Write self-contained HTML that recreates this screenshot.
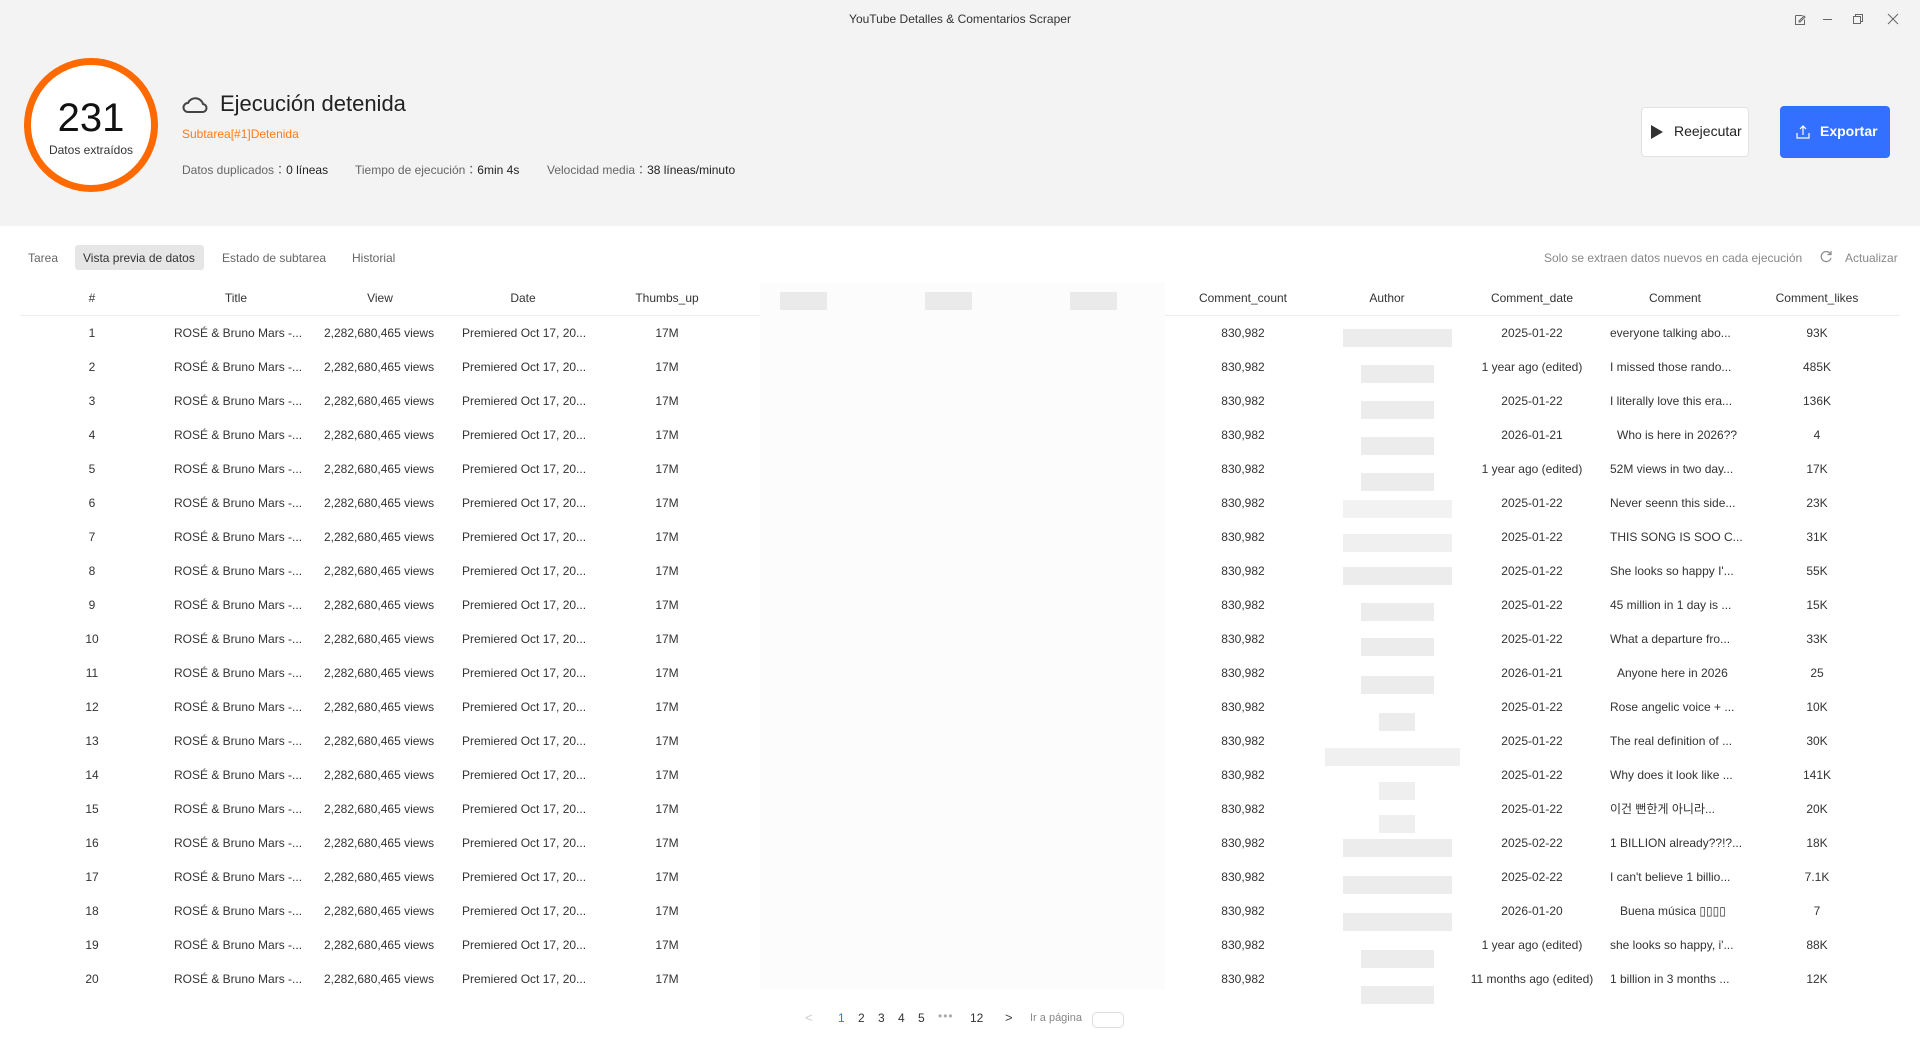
<!DOCTYPE html>
<html><head><meta charset="utf-8"><style>
*{margin:0;padding:0;box-sizing:border-box}
body{width:1920px;height:1040px;position:relative;background:#fff;font-family:"Liberation Sans","Noto Sans CJK KR",sans-serif;color:#333;overflow:hidden}
.hdr{position:absolute;left:0;top:0;width:1920px;height:226px;background:#f3f3f3}
.a{position:absolute;white-space:nowrap}
.circle{position:absolute;left:24px;top:58px;width:134px;height:134px;border:7px solid #ff6a00;border-radius:50%;background:#fff}
.row{position:absolute;left:20px;width:1880px;height:34px;font-size:12px}
.row span{position:absolute;top:0;line-height:34px;white-space:nowrap}
.c{width:140px;text-align:center}
.blur{position:absolute;left:760px;top:282px;width:405px;height:708px;background:#fcfcfc}
.box{position:absolute;background:#ececec;height:18px}
</style></head><body>
<div class="hdr"></div>
<div class="a" style="left:0;width:1920px;top:12px;text-align:center;font-size:12px;color:#333">YouTube Detalles &amp; Comentarios Scraper</div>
<svg class="a" style="left:1792px;top:12px" width="120" height="16" viewBox="0 0 120 16" fill="none" stroke="#666" stroke-width="1">
<path d="M3.5 3.5h7M3.5 3.5v9h9v-5"/><path d="M7 9l5-5 1 1-5 5H7z"/>
<path d="M31 7.5h9"/>
<rect x="61.5" y="4.5" width="7" height="7"/><path d="M63.5 4.5v-2h7v7h-2"/>
<path d="M96 2l10 10M106 2L96 12"/>
</svg>
<div class="circle"></div>
<div class="a" style="left:24px;width:134px;top:96px;text-align:center;font-size:40px;color:#111">231</div>
<div class="a" style="left:24px;width:134px;top:143px;text-align:center;font-size:12px;color:#333">Datos extraídos</div>
<svg class="a" style="left:182px;top:92px" width="26" height="24" viewBox="0 0 26 24" fill="none" stroke="#444" stroke-width="2"><path d="M6 20h14a4 4 0 0 0 1-8 8 8 0 0 0-15-1 4.5 4.5 0 0 0 0 9z"/></svg>
<div class="a" style="left:220px;top:91px;font-size:22px;color:#222">Ejecución detenida</div>
<div class="a" style="left:182px;top:127px;font-size:12px;color:#ff7a1a">Subtarea[#1]Detenida</div>
<div class="a" style="left:182px;top:161px;font-size:12px;color:#666">Datos duplicados：<b style="font-weight:normal;color:#222">0 líneas</b></div>
<div class="a" style="left:355px;top:161px;font-size:12px;color:#666">Tiempo de ejecución：<span style="color:#222">6min 4s</span></div>
<div class="a" style="left:547px;top:161px;font-size:12px;color:#666">Velocidad media：<span style="color:#222">38 líneas/minuto</span></div>
<div class="a" style="left:1641px;top:107px;width:108px;height:50px;background:#fff;border:1px solid #e2e2e2;border-radius:4px"></div>
<svg class="a" style="left:1650px;top:124px" width="14" height="16"><path d="M1 1L13 8 1 15z" fill="#333"/></svg>
<div class="a" style="left:1674px;top:123px;font-size:14px;color:#222">Reejecutar</div>
<div class="a" style="left:1780px;top:106px;width:110px;height:52px;background:#3370ff;border-radius:4px"></div>
<svg class="a" style="left:1795px;top:124px" width="16" height="16" fill="none" stroke="#fff" stroke-width="1.2"><path d="M2 9v5h12V9M8 11V2M5 5l3-3 3 3"/></svg>
<div class="a" style="left:1820px;top:123px;font-size:14px;color:#fff;font-weight:bold">Exportar</div>
<div class="a" style="left:75px;top:245px;width:129px;height:25px;background:#e6e6e6;border-radius:3px"></div>
<div class="a" style="left:28px;top:251px;font-size:12px;color:#666">Tarea</div>
<div class="a" style="left:83px;top:251px;font-size:12px;color:#333">Vista previa de datos</div>
<div class="a" style="left:222px;top:251px;font-size:12px;color:#666">Estado de subtarea</div>
<div class="a" style="left:352px;top:251px;font-size:12px;color:#666">Historial</div>
<div class="a" style="left:1544px;top:251px;font-size:12px;color:#888">Solo se extraen datos nuevos en cada ejecución</div>
<svg class="a" style="left:1819px;top:250px" width="14" height="14" fill="none" stroke="#888" stroke-width="1.2"><path d="M11.5 4A5 5 0 1 0 12 8"/><path d="M12 1v3.5H8.5"/></svg>
<div class="a" style="left:1845px;top:251px;font-size:12px;color:#888">Actualizar</div>
<div class="blur"></div>
<div class="a" style="left:20px;top:315px;width:740px;height:1px;background:#ececec"></div>
<div class="a" style="left:1165px;top:315px;width:735px;height:1px;background:#ececec"></div>
<div class="box" style="left:780px;top:292px;width:47px;background:#eaeaea"></div>
<div class="box" style="left:925px;top:292px;width:47px;background:#eaeaea"></div>
<div class="box" style="left:1070px;top:292px;width:47px;background:#eaeaea"></div>
<div class="row" style="top:281px"><span class="c" style="left:2px">#</span><span class="c" style="left:146px">Title</span><span class="c" style="left:290px">View</span><span class="c" style="left:433px">Date</span><span class="c" style="left:577px">Thumbs_up</span><span class="c" style="left:1153px">Comment_count</span><span class="c" style="left:1297px">Author</span><span class="c" style="left:1442px">Comment_date</span><span class="c" style="left:1585px">Comment</span><span class="c" style="left:1727px">Comment_likes</span></div>

<div class="row" style="top:316px"><span class="c" style="left:2px">1</span><span style="left:154px">ROSÉ &amp; Bruno Mars -...</span><span style="left:304px">2,282,680,465 views</span><span style="left:442px">Premiered Oct 17, 20...</span><span class="c" style="left:577px">17M</span><span class="c" style="left:1153px">830,982</span><span class="c" style="left:1442px">2025-01-22</span><span style="left:1590px">everyone talking abo...</span><span class="c" style="left:1727px">93K</span></div>
<div class="row" style="top:350px"><span class="c" style="left:2px">2</span><span style="left:154px">ROSÉ &amp; Bruno Mars -...</span><span style="left:304px">2,282,680,465 views</span><span style="left:442px">Premiered Oct 17, 20...</span><span class="c" style="left:577px">17M</span><span class="c" style="left:1153px">830,982</span><span class="c" style="left:1442px">1 year ago (edited)</span><span style="left:1590px">I missed those rando...</span><span class="c" style="left:1727px">485K</span></div>
<div class="row" style="top:384px"><span class="c" style="left:2px">3</span><span style="left:154px">ROSÉ &amp; Bruno Mars -...</span><span style="left:304px">2,282,680,465 views</span><span style="left:442px">Premiered Oct 17, 20...</span><span class="c" style="left:577px">17M</span><span class="c" style="left:1153px">830,982</span><span class="c" style="left:1442px">2025-01-22</span><span style="left:1590px">I literally love this era...</span><span class="c" style="left:1727px">136K</span></div>
<div class="row" style="top:418px"><span class="c" style="left:2px">4</span><span style="left:154px">ROSÉ &amp; Bruno Mars -...</span><span style="left:304px">2,282,680,465 views</span><span style="left:442px">Premiered Oct 17, 20...</span><span class="c" style="left:577px">17M</span><span class="c" style="left:1153px">830,982</span><span class="c" style="left:1442px">2026-01-21</span><span style="left:1597px">Who is here in 2026??</span><span class="c" style="left:1727px">4</span></div>
<div class="row" style="top:452px"><span class="c" style="left:2px">5</span><span style="left:154px">ROSÉ &amp; Bruno Mars -...</span><span style="left:304px">2,282,680,465 views</span><span style="left:442px">Premiered Oct 17, 20...</span><span class="c" style="left:577px">17M</span><span class="c" style="left:1153px">830,982</span><span class="c" style="left:1442px">1 year ago (edited)</span><span style="left:1590px">52M views in two day...</span><span class="c" style="left:1727px">17K</span></div>
<div class="row" style="top:486px"><span class="c" style="left:2px">6</span><span style="left:154px">ROSÉ &amp; Bruno Mars -...</span><span style="left:304px">2,282,680,465 views</span><span style="left:442px">Premiered Oct 17, 20...</span><span class="c" style="left:577px">17M</span><span class="c" style="left:1153px">830,982</span><span class="c" style="left:1442px">2025-01-22</span><span style="left:1590px">Never seenn this side...</span><span class="c" style="left:1727px">23K</span></div>
<div class="row" style="top:520px"><span class="c" style="left:2px">7</span><span style="left:154px">ROSÉ &amp; Bruno Mars -...</span><span style="left:304px">2,282,680,465 views</span><span style="left:442px">Premiered Oct 17, 20...</span><span class="c" style="left:577px">17M</span><span class="c" style="left:1153px">830,982</span><span class="c" style="left:1442px">2025-01-22</span><span style="left:1590px">THIS SONG IS SOO C...</span><span class="c" style="left:1727px">31K</span></div>
<div class="row" style="top:554px"><span class="c" style="left:2px">8</span><span style="left:154px">ROSÉ &amp; Bruno Mars -...</span><span style="left:304px">2,282,680,465 views</span><span style="left:442px">Premiered Oct 17, 20...</span><span class="c" style="left:577px">17M</span><span class="c" style="left:1153px">830,982</span><span class="c" style="left:1442px">2025-01-22</span><span style="left:1590px">She looks so happy I'...</span><span class="c" style="left:1727px">55K</span></div>
<div class="row" style="top:588px"><span class="c" style="left:2px">9</span><span style="left:154px">ROSÉ &amp; Bruno Mars -...</span><span style="left:304px">2,282,680,465 views</span><span style="left:442px">Premiered Oct 17, 20...</span><span class="c" style="left:577px">17M</span><span class="c" style="left:1153px">830,982</span><span class="c" style="left:1442px">2025-01-22</span><span style="left:1590px">45 million in 1 day is ...</span><span class="c" style="left:1727px">15K</span></div>
<div class="row" style="top:622px"><span class="c" style="left:2px">10</span><span style="left:154px">ROSÉ &amp; Bruno Mars -...</span><span style="left:304px">2,282,680,465 views</span><span style="left:442px">Premiered Oct 17, 20...</span><span class="c" style="left:577px">17M</span><span class="c" style="left:1153px">830,982</span><span class="c" style="left:1442px">2025-01-22</span><span style="left:1590px">What a departure fro...</span><span class="c" style="left:1727px">33K</span></div>
<div class="row" style="top:656px"><span class="c" style="left:2px">11</span><span style="left:154px">ROSÉ &amp; Bruno Mars -...</span><span style="left:304px">2,282,680,465 views</span><span style="left:442px">Premiered Oct 17, 20...</span><span class="c" style="left:577px">17M</span><span class="c" style="left:1153px">830,982</span><span class="c" style="left:1442px">2026-01-21</span><span style="left:1597px">Anyone here in 2026</span><span class="c" style="left:1727px">25</span></div>
<div class="row" style="top:690px"><span class="c" style="left:2px">12</span><span style="left:154px">ROSÉ &amp; Bruno Mars -...</span><span style="left:304px">2,282,680,465 views</span><span style="left:442px">Premiered Oct 17, 20...</span><span class="c" style="left:577px">17M</span><span class="c" style="left:1153px">830,982</span><span class="c" style="left:1442px">2025-01-22</span><span style="left:1590px">Rose angelic voice + ...</span><span class="c" style="left:1727px">10K</span></div>
<div class="row" style="top:724px"><span class="c" style="left:2px">13</span><span style="left:154px">ROSÉ &amp; Bruno Mars -...</span><span style="left:304px">2,282,680,465 views</span><span style="left:442px">Premiered Oct 17, 20...</span><span class="c" style="left:577px">17M</span><span class="c" style="left:1153px">830,982</span><span class="c" style="left:1442px">2025-01-22</span><span style="left:1590px">The real definition of ...</span><span class="c" style="left:1727px">30K</span></div>
<div class="row" style="top:758px"><span class="c" style="left:2px">14</span><span style="left:154px">ROSÉ &amp; Bruno Mars -...</span><span style="left:304px">2,282,680,465 views</span><span style="left:442px">Premiered Oct 17, 20...</span><span class="c" style="left:577px">17M</span><span class="c" style="left:1153px">830,982</span><span class="c" style="left:1442px">2025-01-22</span><span style="left:1590px">Why does it look like ...</span><span class="c" style="left:1727px">141K</span></div>
<div class="row" style="top:792px"><span class="c" style="left:2px">15</span><span style="left:154px">ROSÉ &amp; Bruno Mars -...</span><span style="left:304px">2,282,680,465 views</span><span style="left:442px">Premiered Oct 17, 20...</span><span class="c" style="left:577px">17M</span><span class="c" style="left:1153px">830,982</span><span class="c" style="left:1442px">2025-01-22</span><span style="left:1590px">이건 뻔한게 아니라...</span><span class="c" style="left:1727px">20K</span></div>
<div class="row" style="top:826px"><span class="c" style="left:2px">16</span><span style="left:154px">ROSÉ &amp; Bruno Mars -...</span><span style="left:304px">2,282,680,465 views</span><span style="left:442px">Premiered Oct 17, 20...</span><span class="c" style="left:577px">17M</span><span class="c" style="left:1153px">830,982</span><span class="c" style="left:1442px">2025-02-22</span><span style="left:1590px">1 BILLION already??!?...</span><span class="c" style="left:1727px">18K</span></div>
<div class="row" style="top:860px"><span class="c" style="left:2px">17</span><span style="left:154px">ROSÉ &amp; Bruno Mars -...</span><span style="left:304px">2,282,680,465 views</span><span style="left:442px">Premiered Oct 17, 20...</span><span class="c" style="left:577px">17M</span><span class="c" style="left:1153px">830,982</span><span class="c" style="left:1442px">2025-02-22</span><span style="left:1590px">I can't believe 1 billio...</span><span class="c" style="left:1727px">7.1K</span></div>
<div class="row" style="top:894px"><span class="c" style="left:2px">18</span><span style="left:154px">ROSÉ &amp; Bruno Mars -...</span><span style="left:304px">2,282,680,465 views</span><span style="left:442px">Premiered Oct 17, 20...</span><span class="c" style="left:577px">17M</span><span class="c" style="left:1153px">830,982</span><span class="c" style="left:1442px">2026-01-20</span><span style="left:1600px">Buena música ▯▯▯▯</span><span class="c" style="left:1727px">7</span></div>
<div class="row" style="top:928px"><span class="c" style="left:2px">19</span><span style="left:154px">ROSÉ &amp; Bruno Mars -...</span><span style="left:304px">2,282,680,465 views</span><span style="left:442px">Premiered Oct 17, 20...</span><span class="c" style="left:577px">17M</span><span class="c" style="left:1153px">830,982</span><span class="c" style="left:1442px">1 year ago (edited)</span><span style="left:1590px">she looks so happy, i'...</span><span class="c" style="left:1727px">88K</span></div>
<div class="row" style="top:962px"><span class="c" style="left:2px">20</span><span style="left:154px">ROSÉ &amp; Bruno Mars -...</span><span style="left:304px">2,282,680,465 views</span><span style="left:442px">Premiered Oct 17, 20...</span><span class="c" style="left:577px">17M</span><span class="c" style="left:1153px">830,982</span><span class="c" style="left:1422px;width:180px">11 months ago (edited)</span><span style="left:1590px">1 billion in 3 months ...</span><span class="c" style="left:1727px">12K</span></div>

<div class="box" style="left:1343px;top:329px;width:109px"></div>
<div class="box" style="left:1361px;top:365px;width:73px"></div>
<div class="box" style="left:1361px;top:401px;width:73px"></div>
<div class="box" style="left:1361px;top:437px;width:73px"></div>
<div class="box" style="left:1361px;top:473px;width:73px"></div>
<div class="box" style="left:1343px;top:500px;width:109px;background:#f2f2f2"></div>
<div class="box" style="left:1343px;top:534px;width:109px;background:#f0f0f0"></div>
<div class="box" style="left:1343px;top:567px;width:109px"></div>
<div class="box" style="left:1361px;top:603px;width:73px"></div>
<div class="box" style="left:1361px;top:638px;width:73px"></div>
<div class="box" style="left:1361px;top:676px;width:73px"></div>
<div class="box" style="left:1379px;top:713px;width:36px"></div>
<div class="box" style="left:1325px;top:748px;width:135px;background:#f0f0f0"></div>
<div class="box" style="left:1379px;top:782px;width:36px;background:#efefef"></div>
<div class="box" style="left:1379px;top:815px;width:36px;background:#efefef"></div>
<div class="box" style="left:1343px;top:839px;width:109px"></div>
<div class="box" style="left:1343px;top:876px;width:109px"></div>
<div class="box" style="left:1343px;top:913px;width:109px"></div>
<div class="box" style="left:1361px;top:950px;width:73px"></div>
<div class="box" style="left:1361px;top:986px;width:73px"></div>

<div class="a" style="left:805px;top:1010px;font-size:13px;color:#ccc">&lt;</div>
<div class="a" style="left:838px;top:1011px;font-size:12px;color:#3370ff">1</div>
<div class="a" style="left:858px;top:1011px;font-size:12px;color:#333">2</div>
<div class="a" style="left:878px;top:1011px;font-size:12px;color:#333">3</div>
<div class="a" style="left:898px;top:1011px;font-size:12px;color:#333">4</div>
<div class="a" style="left:918px;top:1011px;font-size:12px;color:#333">5</div>
<div class="a" style="left:938px;top:1009px;font-size:12px;color:#aaa;letter-spacing:1px">•••</div>
<div class="a" style="left:970px;top:1011px;font-size:12px;color:#333">12</div>
<div class="a" style="left:1005px;top:1010px;font-size:13px;color:#444">&gt;</div>
<div class="a" style="left:1030px;top:1012px;font-size:11px;color:#888">Ir a página</div>
<div class="a" style="left:1092px;top:1012px;width:32px;height:16px;border:1px solid #ddd;border-radius:5px"></div>
</body></html>
